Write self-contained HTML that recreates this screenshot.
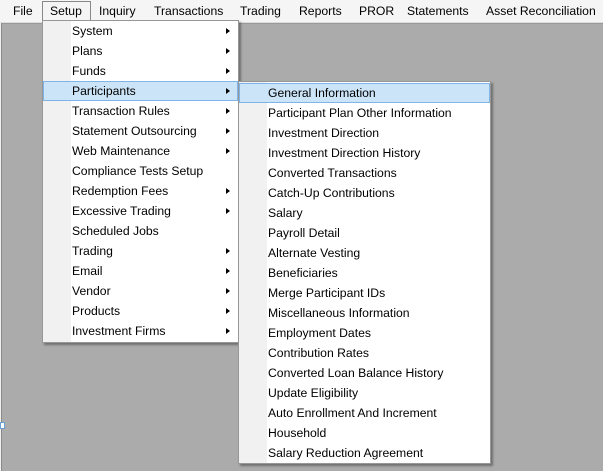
<!DOCTYPE html>
<html><head><style>
body{margin:0;width:603px;height:470px;overflow:hidden;background:#f0f0f0;font-family:"Liberation Sans",sans-serif;font-size:12.2px;color:#000;position:relative}
.bar{position:absolute;left:0;top:0;width:603px;height:22px;background:#f5f5f5;border-bottom:1px solid #dcdcdc}
.bar span{position:absolute;top:4px;white-space:nowrap}
.area{position:absolute;left:1px;top:23px;width:602px;height:447px;background:#ababab;border-left:1px solid #888;border-top:1px solid #999}
.setup{position:absolute;left:42px;top:1px;width:47px;height:21px;border:1px solid #888;border-bottom:none;background:#f5f5f5}
.menu{position:absolute;background:#fff;border:1px solid #979797;box-shadow:2px 2px 2px rgba(0,0,0,.35)}
.menu .gut{position:absolute;left:0;top:0;bottom:0;width:28px;background:#f1f1f1}
.it{position:relative;height:20px;line-height:20px;white-space:nowrap}
.it .t{position:absolute;left:29px}
.it .a{position:absolute;right:8px;top:7px;width:0;height:0;border-top:3px solid transparent;border-bottom:3px solid transparent;border-left:4px solid #000}
.hl{background:#cce4f7;outline:1px solid #7fb4e6;outline-offset:-1px}
.m1{left:42px;top:20px;width:195px;padding:0 0 1px}
.m2{left:238px;top:81px;width:251px;padding:1px 0 0}
</style></head><body>
<div class="bar">
<div class="setup"></div>
<span style="left:13px">File</span>
<span style="left:50px">Setup</span>
<span style="left:99px">Inquiry</span>
<span style="left:154px">Transactions</span>
<span style="left:240px">Trading</span>
<span style="left:299px">Reports</span>
<span style="left:359px">PROR</span>
<span style="left:407px">Statements</span>
<span style="left:486px">Asset Reconciliation</span>
</div>
<div class="area"></div>
<div style="position:absolute;left:0;top:422px;width:3px;height:5px;background:#fff;border:1px solid #6aa0d8"></div>
<div class="menu m1"><div class="gut"></div>
<div class="it"><span class="t">System</span><span class="a"></span></div>
<div class="it"><span class="t">Plans</span><span class="a"></span></div>
<div class="it"><span class="t">Funds</span><span class="a"></span></div>
<div class="it hl"><span class="t">Participants</span><span class="a"></span></div>
<div class="it"><span class="t">Transaction Rules</span><span class="a"></span></div>
<div class="it"><span class="t">Statement Outsourcing</span><span class="a"></span></div>
<div class="it"><span class="t">Web Maintenance</span><span class="a"></span></div>
<div class="it"><span class="t">Compliance Tests Setup</span></div>
<div class="it"><span class="t">Redemption Fees</span><span class="a"></span></div>
<div class="it"><span class="t">Excessive Trading</span><span class="a"></span></div>
<div class="it"><span class="t">Scheduled Jobs</span></div>
<div class="it"><span class="t">Trading</span><span class="a"></span></div>
<div class="it"><span class="t">Email</span><span class="a"></span></div>
<div class="it"><span class="t">Vendor</span><span class="a"></span></div>
<div class="it"><span class="t">Products</span><span class="a"></span></div>
<div class="it"><span class="t">Investment Firms</span><span class="a"></span></div>
</div>
<div class="menu m2"><div class="gut"></div>
<div class="it hl"><span class="t">General Information</span></div>
<div class="it"><span class="t">Participant Plan Other Information</span></div>
<div class="it"><span class="t">Investment Direction</span></div>
<div class="it"><span class="t">Investment Direction History</span></div>
<div class="it"><span class="t">Converted Transactions</span></div>
<div class="it"><span class="t">Catch-Up Contributions</span></div>
<div class="it"><span class="t">Salary</span></div>
<div class="it"><span class="t">Payroll Detail</span></div>
<div class="it"><span class="t">Alternate Vesting</span></div>
<div class="it"><span class="t">Beneficiaries</span></div>
<div class="it"><span class="t">Merge Participant IDs</span></div>
<div class="it"><span class="t">Miscellaneous Information</span></div>
<div class="it"><span class="t">Employment Dates</span></div>
<div class="it"><span class="t">Contribution Rates</span></div>
<div class="it"><span class="t">Converted Loan Balance History</span></div>
<div class="it"><span class="t">Update Eligibility</span></div>
<div class="it"><span class="t">Auto Enrollment And Increment</span></div>
<div class="it"><span class="t">Household</span></div>
<div class="it"><span class="t">Salary Reduction Agreement</span></div>
</div>
</body></html>
